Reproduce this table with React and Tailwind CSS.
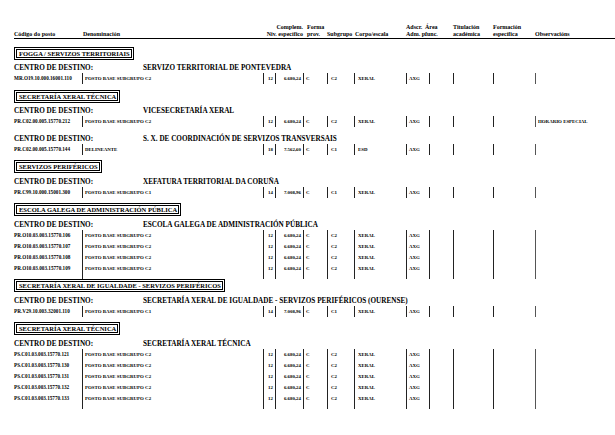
import React from "react";

const base2 = { den: "POSTO BASE SUBGRUPO C2", niv: "12", comp: "6.680,24", forma: "C", sub: "C2", corpo: "XERAL", adscr: "AXG", obs: "" };
const base1 = { den: "POSTO BASE SUBGRUPO C1", niv: "14", comp: "7.008,96", forma: "C", sub: "C1", corpo: "XERAL", adscr: "AXG", obs: "" };

const grupos = [
  {
    titulo: "FOGGA / SERVIZOS TERRITORIAIS",
    centros: [
      { nome: "SERVIZO TERRITORIAL DE PONTEVEDRA", postos: [{ ...base2, cod: "MR.O19.10.000.16001.110" }] },
    ],
  },
  {
    titulo: "SECRETARÍA XERAL TÉCNICA",
    centros: [
      {
        nome: "VICESECRETARÍA XERAL",
        postos: [{ ...base2, cod: "PR.C02.00.005.15770.212", obs: "HORARIO ESPECIAL" }],
      },
      {
        nome: "S. X. DE COORDINACIÓN DE SERVIZOS TRANSVERSAIS",
        postos: [
          { cod: "PR.C02.00.005.15770.144", den: "DELINEANTE", niv: "18", comp: "7.562,60", forma: "C", sub: "C1", corpo: "ESD", adscr: "AXG", obs: "" },
        ],
      },
    ],
  },
  {
    titulo: "SERVIZOS PERIFÉRICOS",
    centros: [
      { nome: "XEFATURA TERRITORIAL DA CORUÑA", postos: [{ ...base1, cod: "PR.C99.10.000.15001.300" }] },
    ],
  },
  {
    titulo: "ESCOLA GALEGA DE ADMINISTRACIÓN PÚBLICA",
    centros: [
      {
        nome: "ESCOLA GALEGA DE ADMINISTRACIÓN PÚBLICA",
        postos: [
          { ...base2, cod: "PR.O10.03.003.15770.106" },
          { ...base2, cod: "PR.O10.03.003.15770.107" },
          { ...base2, cod: "PR.O10.03.003.15770.108" },
          { ...base2, cod: "PR.O10.03.003.15770.109" },
        ],
      },
    ],
  },
  {
    titulo: "SECRETARÍA XERAL DE IGUALDADE - SERVIZOS PERIFÉRICOS",
    centros: [
      {
        nome: "SECRETARÍA XERAL DE IGUALDADE - SERVIZOS PERIFÉRICOS (OURENSE)",
        postos: [{ ...base1, cod: "PR.V29.10.003.32001.110" }],
      },
    ],
  },
  {
    titulo: "SECRETARÍA XERAL TÉCNICA",
    centros: [
      {
        nome: "SECRETARÍA XERAL TÉCNICA",
        postos: [
          { ...base2, cod: "PS.C01.03.003.15770.121" },
          { ...base2, cod: "PS.C01.03.003.15770.130" },
          { ...base2, cod: "PS.C01.03.003.15770.131" },
          { ...base2, cod: "PS.C01.03.003.15770.132" },
          { ...base2, cod: "PS.C01.03.003.15770.133" },
        ],
      },
    ],
  },
];

const Cab = ({ w, a, b }) => (
  <div className={`${w} shrink-0 flex flex-col whitespace-nowrap`}>
    <span className="h-[7px]">{a}</span>
    <span className="h-[7px]">{b}</span>
  </div>
);

const Fila = ({ p, longa }) => (
  <div className={`flex whitespace-nowrap text-[4.9px] leading-[11px] ${longa ? "h-[16px]" : "h-[11px]"}`}>
    <div className="w-[68px] shrink-0 text-[5.2px]">{p.cod}</div>
    <div className="w-[181px] shrink-0 border-l border-[#222] pl-[2px]">{p.den}</div>
    <div className="w-[12px] shrink-0 border-l border-[#222] pl-[4px]">{p.niv}</div>
    <div className="w-[28px] shrink-0 border-l border-[#222] pr-[2px] text-right">{p.comp}</div>
    <div className="w-[24px] shrink-0 border-l border-[#222] pl-[2px]">{p.forma}</div>
    <div className="w-[27px] shrink-0 border-l border-[#222] pl-[3px]">{p.sub}</div>
    <div className="w-[52px] shrink-0 border-l border-[#222] pl-[3px]">{p.corpo}</div>
    <div className="w-[23px] shrink-0 border-l border-[#222] pl-[2px]">{p.adscr}</div>
    <div className="w-[24px] shrink-0 border-l border-[#222]"></div>
    <div className="w-[40px] shrink-0 border-l border-[#222]"></div>
    <div className="w-[42px] shrink-0 border-l border-[#222]"></div>
    <div className="flex-1 border-l border-[#555] pl-[2px]">{p.obs}</div>
  </div>
);

export default function App() {
  let prevLonga = false;
  return (
    <div className="w-[615px] h-[435px] overflow-hidden bg-white pl-[14px] text-black font-bold [font-family:'Liberation_Serif','Times_New_Roman',serif]">
      <div className="flex border-b border-black pt-[24px] text-[6px] leading-[7px]">
        <Cab w="w-[69px]" a="" b="Código do posto" />
        <Cab w="w-[180px]" a="" b="Denominación" />
        <div className="w-[41px] shrink-0 flex flex-col items-end pr-[1px] whitespace-nowrap">
          <span className="h-[7px]">Complem.</span>
          <span className="h-[7px]">Niv. específico</span>
        </div>
        <Cab w="w-[23px] pl-[3px]" a="Forma" b="prov." />
        <Cab w="w-[28px]" a="" b="Subgrupo" />
        <Cab w="w-[51px]" a="" b="Corpo/escala" />
        <Cab w="w-[19px]" a="Adscr." b="Adm. p." />
        <Cab w="w-[28px]" a="Área" b="func." />
        <Cab w="w-[40px]" a="Titulación" b="académica" />
        <Cab w="w-[42px]" a="Formación" b="específica" />
        <Cab w="w-[60px]" a="" b="Observacións" />
      </div>

      {grupos.map((g, gi) => {
        const mt = gi === 0 ? "mt-[7.5px]" : prevLonga ? "mt-[0.5px]" : "mt-[5.5px]";
        const bloque = (
          <div key={gi}>
            <div className={`${mt} w-fit h-[13px] border-[3px] border-double border-black pl-[2px] pr-[1px] text-[6.5px] leading-[7px] whitespace-nowrap`}>
              {g.titulo}
            </div>
            {g.centros.map((c, ci) => {
              const multi = c.postos.length > 1;
              return (
                <div key={ci} className={ci === 0 ? "mt-[3.5px]" : "mt-[6.5px]"}>
                  <div className="flex h-[10px] text-[7.2px] leading-[10px] whitespace-nowrap">
                    <div className="w-[129px] shrink-0">CENTRO DE DESTINO:</div>
                    <div>{c.nome}</div>
                  </div>
                  {c.postos.map((p, pi) => (
                    <Fila key={pi} p={p} longa={multi && pi === c.postos.length - 1} />
                  ))}
                </div>
              );
            })}
          </div>
        );
        const ult = g.centros[g.centros.length - 1];
        prevLonga = ult.postos.length > 1;
        return bloque;
      })}
    </div>
  );
}
